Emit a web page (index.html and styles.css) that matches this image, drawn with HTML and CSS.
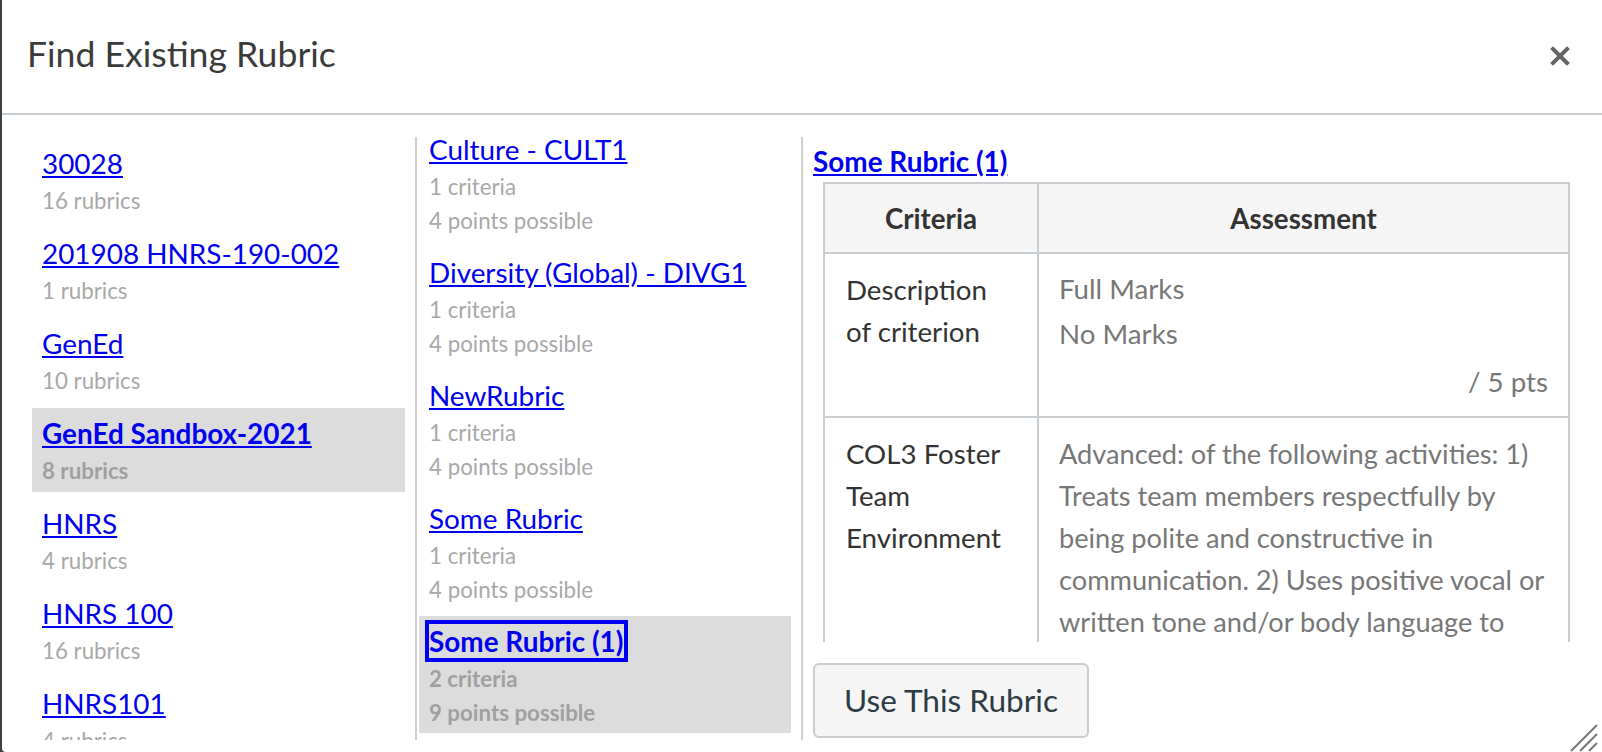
FILE: index.html
```html
<!DOCTYPE html>
<html lang="en">
<head>
<meta charset="utf-8">
<title>Find Existing Rubric</title>
<link rel="stylesheet" href="styles.css">
</head>
<body>
<div class="dialog">
  <div class="dlg-header">
    <h2 class="dlg-title">Find Existing Rubric</h2>
    <button class="dlg-close" aria-label="Close">
      <svg width="20" height="20" viewBox="0 0 20 20"><path d="M3 3 L17 17 M17 3 L3 17" stroke="#666" stroke-width="4" stroke-linecap="square" fill="none"/></svg>
    </button>
  </div>
  <div class="dlg-body">
    <div class="col col-contexts">
      <ul class="list list-contexts">
        <li class="item"><a href="#" class="item-link">30028</a><div class="meta">16 rubrics</div></li>
        <li class="item"><a href="#" class="item-link">201908 HNRS-190-002</a><div class="meta">1 rubrics</div></li>
        <li class="item"><a href="#" class="item-link">GenEd</a><div class="meta">10 rubrics</div></li>
        <li class="item selected"><a href="#" class="item-link">GenEd Sandbox-2021</a><div class="meta">8 rubrics</div></li>
        <li class="item"><a href="#" class="item-link">HNRS</a><div class="meta">4 rubrics</div></li>
        <li class="item"><a href="#" class="item-link">HNRS 100</a><div class="meta">16 rubrics</div></li>
        <li class="item"><a href="#" class="item-link">HNRS101</a><div class="meta">4 rubrics</div></li>
      </ul>
    </div>
    <div class="col col-rubrics">
      <ul class="list list-scrolled">
        <li class="item"><a href="#" class="item-link">Culture - CULT1</a><div class="meta">1 criteria</div><div class="meta">4 points possible</div></li>
        <li class="item"><a href="#" class="item-link">Diversity (Global) - DIVG1</a><div class="meta">1 criteria</div><div class="meta">4 points possible</div></li>
        <li class="item"><a href="#" class="item-link">NewRubric</a><div class="meta">1 criteria</div><div class="meta">4 points possible</div></li>
        <li class="item"><a href="#" class="item-link">Some Rubric</a><div class="meta">1 criteria</div><div class="meta">4 points possible</div></li>
        <li class="item selected"><a href="#" class="item-link focused">Some Rubric (1)</a><div class="meta">2 criteria</div><div class="meta">9 points possible</div></li>
      </ul>
    </div>
    <div class="col col-preview">
      <div class="preview">
        <a href="#" class="preview-title">Some Rubric (1)</a>
        <table class="rubric">
          <thead>
            <tr><th class="c-crit">Criteria</th><th class="c-assess">Assessment</th></tr>
          </thead>
          <tbody>
            <tr>
              <td class="crit">Description of criterion</td>
              <td class="assess">
                <div class="ratings">
                  <div class="rating">Full Marks</div>
                  <div class="rating">No Marks</div>
                </div>
                <div class="pts">/ 5 pts</div>
              </td>
            </tr>
            <tr>
              <td class="crit">COL3 Foster Team Environment</td>
              <td class="assess desc">Advanced: of the following activities: 1) Treats team members respectfully by being polite and constructive in communication. 2) Uses positive vocal or written tone and/or body language to convey a positive attitude about the team and its work.</td>
            </tr>
          </tbody>
        </table>
      </div>
      <button class="use-btn">Use This Rubric</button>
    </div>
  </div>
  <svg class="grip" width="30" height="28" viewBox="0 0 30 28"><path d="M1 27 L27 1 M10 27 L27 10 M19 27 L27 19" stroke="#777" stroke-width="2" fill="none"/></svg>
</div>
</body>
</html>
```
FILE: styles.css
```css
html, body {
  margin: 0;
  padding: 0;
  height: 752px;
  overflow: hidden;
  background: #394045;
}

body {
  font-family: "Lato", "Noto Sans", sans-serif;
}

.dialog {
  position: relative;
  margin-left: 2px;
  height: 752px;
  background: #fff;
  border-bottom-left-radius: 4px;
  overflow: hidden;
}

.dlg-header {
  height: 113px;
  border-bottom: 2px solid #c7cdd1;
  display: flex;
  justify-content: space-between;
  align-items: flex-start;
  padding: 0 32px 0 25px;
}

.dlg-title {
  margin: 33px 0 0;
  font-size: 35.6px;
  line-height: 42px;
  font-weight: 400;
  color: #3b3b3b;
}

.dlg-close {
  margin-top: 46px;
  padding: 0;
  border: 0;
  background: none;
  width: 20px;
  height: 20px;
  display: flex;
}

.dlg-body {
  display: flex;
  padding-top: 22px;
  height: 603px;
}

.col {
  height: 603px;
  overflow: hidden;
  box-sizing: border-box;
}

.col-contexts {
  width: 415px;
  padding: 0 10px 0 30px;
  border-right: 2px solid #cfcfcf;
}

.col-rubrics {
  width: 386px;
  padding: 0 10px 0 2px;
  border-right: 2px solid #cfcfcf;
}

.col-preview {
  flex: 1;
  padding: 0 22px 0 10px;
}

.list {
  list-style: none;
  margin: 0;
  padding: 0;
}

.list-contexts {
  padding-top: 1px;
}

.list-contexts .item {
  padding-bottom: 4.5px;
}

.list-scrolled {
  margin-top: -13px;
}

.item {
  padding: 4px 10px;
  margin-bottom: 6px;
}

.item-link {
  font-size: 27.9px;
  line-height: 42px;
  color: #0000ee;
}

.meta {
  font-size: 22.3px;
  line-height: 33.5px;
  color: #a8a8a8;
}

.selected {
  background: #dcdcdc;
}

.selected .item-link,
.selected .meta {
  font-weight: 700;
}

.selected .meta {
  color: #a0a0a0;
}

.focused {
  display: inline-block;
  outline: 4px solid #0000ee;
  outline-offset: -4px;
  padding: 0 5px 0 4px;
  margin-left: -4px;
  text-decoration: none;
}

.preview {
  height: 505px;
  overflow: hidden;
  padding-top: 3px;
  box-sizing: border-box;
}

.preview-title {
  display: block;
  width: max-content;
  font-size: 27.9px;
  line-height: 42px;
  font-weight: 700;
  color: #0000ee;
}

.rubric {
  margin-left: 10px;
  width: 747px;
  table-layout: fixed;
  border-collapse: separate;
  border-spacing: 0;
  border-top: 2px solid #c7cdd1;
  border-left: 2px solid #c7cdd1;
  font-size: 27.7px;
  line-height: 42px;
  color: #333;
}

.rubric th,
.rubric td {
  border-right: 2px solid #c7cdd1;
  border-bottom: 2px solid #c7cdd1;
  box-sizing: border-box;
  vertical-align: top;
  text-align: left;
}

.rubric th {
  background: #f5f5f5;
  font-weight: 700;
  text-align: center;
  padding: 14px 14px 12px;
}

.c-crit {
  width: 214px;
}

.crit {
  padding: 15px 24px 13px 21px;
}

.assess {
  padding: 15px 20px 13px 20px;
  color: #777;
}

.ratings {
  margin-top: -1px;
}

.rating + .rating {
  margin-top: 3px;
}

.pts {
  margin-top: 6px;
  text-align: right;
}

.desc {
  font-size: 27.2px;
}

.use-btn {
  display: block;
  margin-top: 21px;
  width: 276px;
  height: 75px;
  box-sizing: border-box;
  border: 2px solid #c7cdd1;
  border-radius: 6px;
  background: #f5f5f5;
  color: #2d3b45;
  font-family: "Lato", "Noto Sans", sans-serif;
  font-size: 31.6px;
  line-height: 71px;
  padding: 0 0 0 29px;
  text-align: left;
}

.grip {
  position: absolute;
  right: 2px;
  bottom: 0;
}
```
